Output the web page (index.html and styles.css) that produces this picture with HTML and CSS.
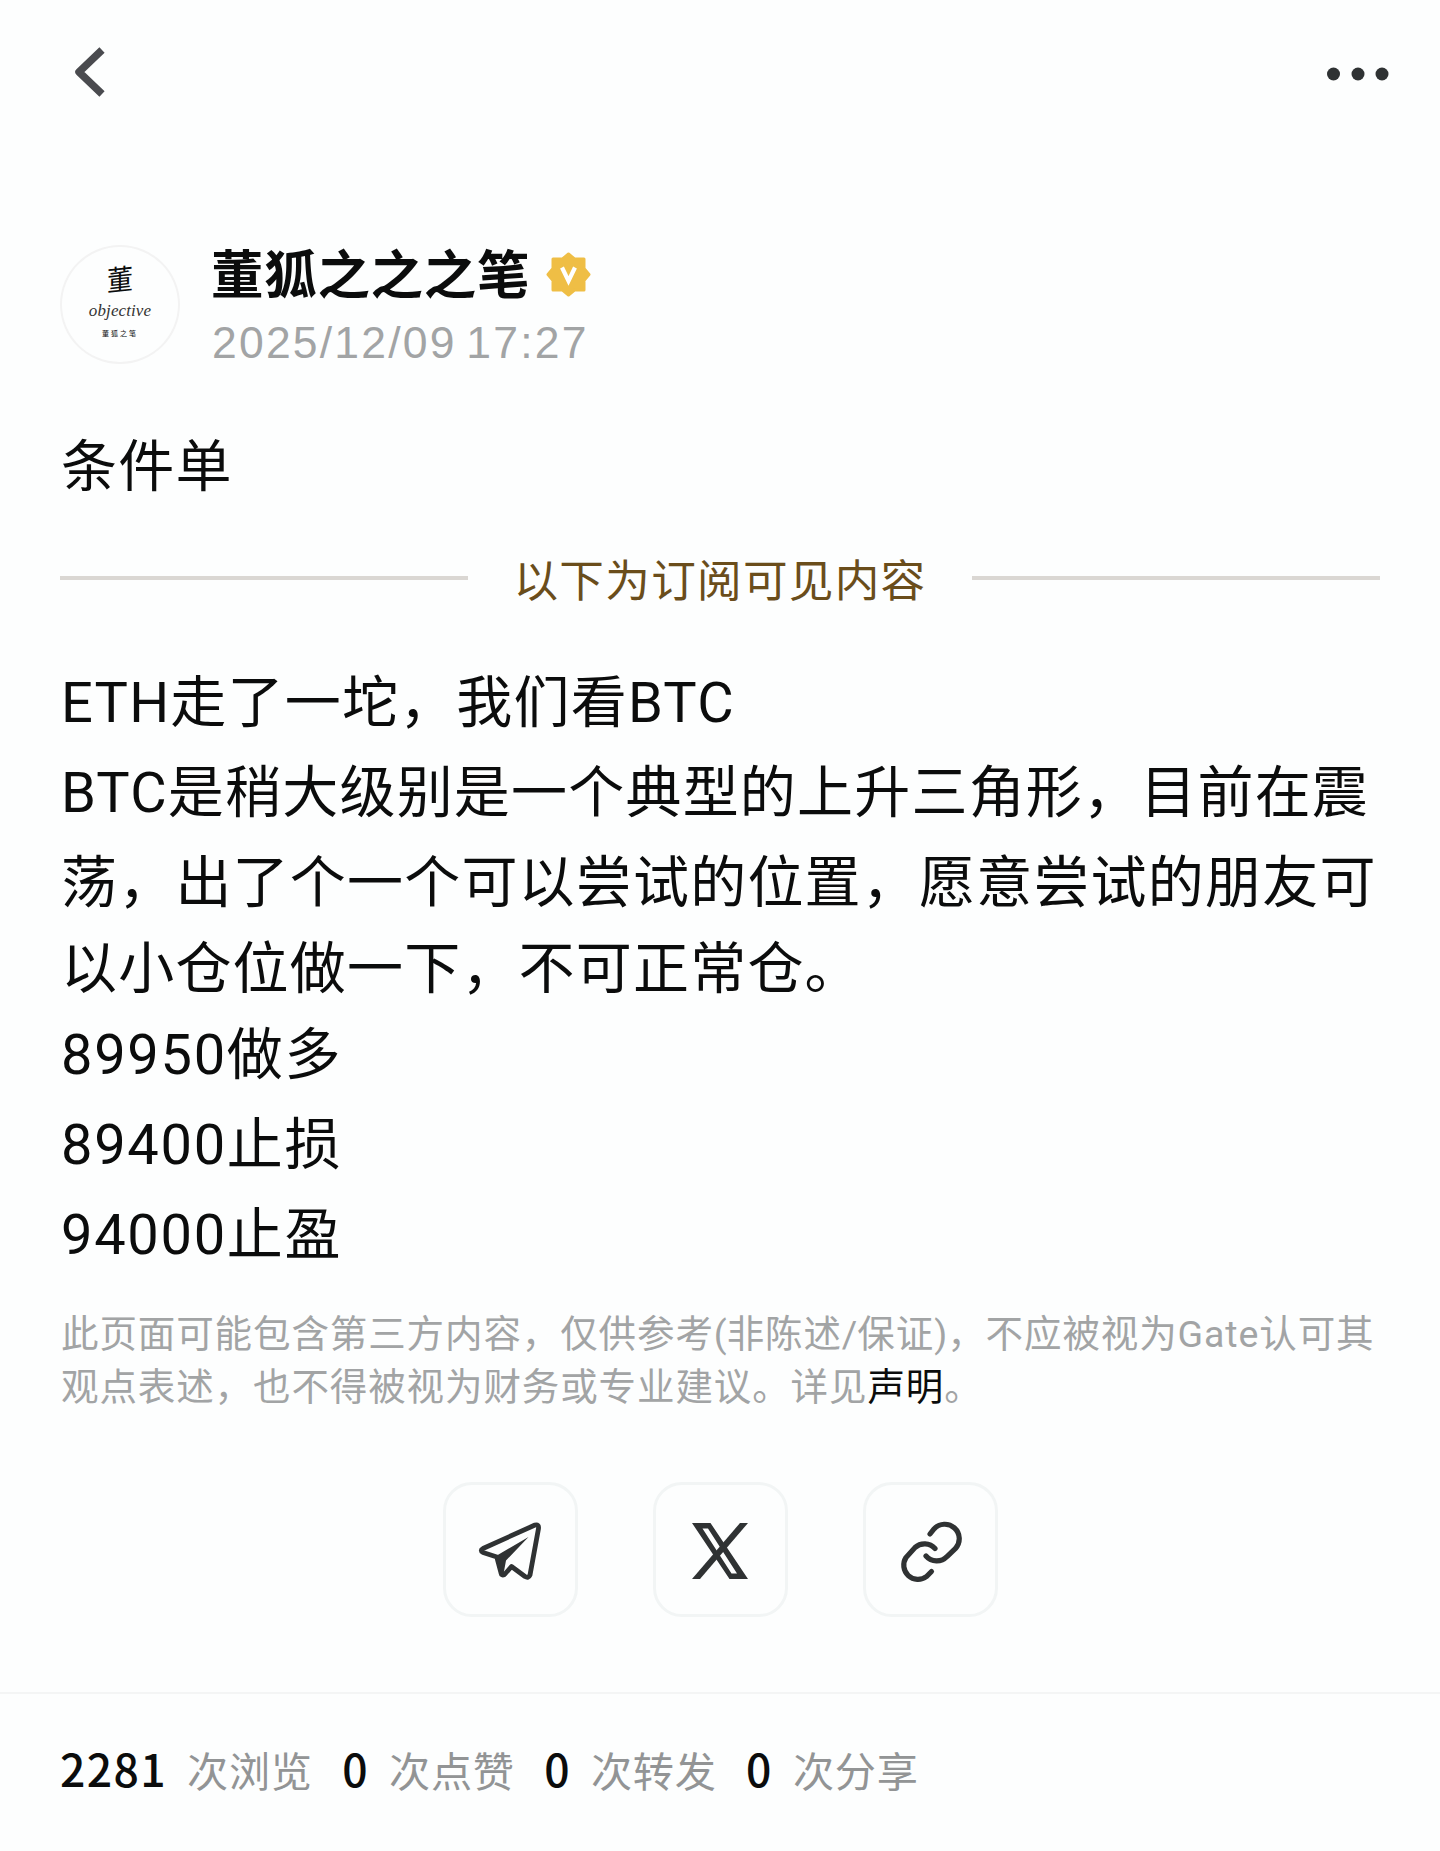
FILE: index.html
```
<!DOCTYPE html>
<html lang="zh-CN">
<head>
    <meta charset="UTF-8">
    <meta name="viewport" content="width=device-width, initial-scale=1.0">
    <title>条件单</title>
    <link rel="stylesheet" href="styles.css">
</head>
<body>
<div class="topbar">
    <svg class="back-icon" viewBox="0 0 32 52" fill="none" stroke="#4a4b4f" stroke-width="7.5" stroke-linejoin="round">
        <path d="M29 4 L6 26 L29 48"/>
    </svg>
    <svg class="more-icon" viewBox="0 0 62 14" fill="#2f3233">
        <circle cx="6.5" cy="7" r="6.5"/>
        <circle cx="31" cy="7" r="6.5"/>
        <circle cx="55" cy="7" r="6.5"/>
    </svg>
</div>
<div class="post">
    <div class="author">
        <div class="avatar">
            <span class="avatar-char">董</span>
            <span class="avatar-word">objective</span>
            <span class="avatar-small">董狐之笔</span>
        </div>
        <div class="author-info">
            <div class="name-row">
                <span class="name">董狐之之之笔</span>
                <svg class="badge" viewBox="0 0 45 45">
                    <path d="M22.5 2 L28.5 7 H38 V16.5 L43 22.5 L38 28.5 V38 H28.5 L22.5 43 L16.5 38 H7 V28.5 L2 22.5 L7 16.5 V7 H16.5 Z" fill="#efbe45" stroke="#efbe45" stroke-width="3" stroke-linejoin="round"/>
                    <path d="M16 15.5 L22.5 29 L29 15.5" fill="none" stroke="#fff" stroke-width="4.2"/>
                </svg>
            </div>
            <div class="date">2025/12/09 17:27</div>
        </div>
    </div>
    <div class="title">条件单</div>
    <div class="divider">
        <span class="line"></span>
        <span class="divider-text">以下为订阅可见内容</span>
        <span class="line"></span>
    </div>
    <div class="content">
        <p>ETH走了一坨，我们看BTC</p>
        <p>BTC是稍大级别是一个典型的上升三角形，目前在震</p>
        <p>荡，出了个一个可以尝试的位置，愿意尝试的朋友可</p>
        <p class="tight">以小仓位做一下，不可正常仓。</p>
        <p class="price">89950做多</p>
        <p class="price">89400止损</p>
        <p class="price">94000止盈</p>
    </div>
    <div class="notice">
        此页面可能包含第三方内容，仅供参考<span class="latin">(</span>非陈述<span class="latin">/</span>保证<span class="latin">)</span>，不应被视为Gate认可其<br>
        观点表述，也不得被视为财务或专业建议。详见<a href="#">声明</a>。
    </div>
    <div class="share">
        <button class="share-button">
            <svg viewBox="0 0 64 64" fill="none" stroke="#2f3233" stroke-width="4.8" stroke-linejoin="round" stroke-linecap="round">
                <path d="M22 39 L5 33.500 Q1.500 31.500 5 29.500 L57 6 Q61 5 60.500 9.500 L52 56 Q50.500 59.500 47 57.500 L33.500 47.500 L26.500 55.500 Q23.500 57 23 54 L19 39"/>
                <path d="M18 37 L50.500 18 L28 41.500 L25.500 55 H23 Z" fill="#2f3233" stroke="none"/>
            </svg>
        </button>
        <button class="share-button">
            <svg viewBox="0 0 64 64" fill="#2f3233" fill-rule="evenodd">
                <path d="M4 4 H22.500 L60 60 H41.500 Z M14.500 9.500 L43.500 54.500 H49 L20 9.500 Z"/>
                <path d="M52 4 H60 L12 60 H4 Z"/>
            </svg>
        </button>
        <button class="share-button">
            <svg viewBox="0 0 64 64" fill="none" stroke="#2f3233" stroke-width="5.2" stroke-linecap="round">
                <path d="M32 15 L36 10 A14.200 14.200 0 0 1 57.500 29.500 L49 37.500 A14.200 14.200 0 0 1 28 37"/>
                <path d="M37 29.500 A14.200 14.200 0 0 0 17 28.500 L8 38.500 A14.200 14.200 0 0 0 28.500 57.500 L33.500 52.500"/>
            </svg>
        </button>
    </div>
</div>
<div class="stats">
    <span class="stat"><b>2281</b>次浏览</span>
    <span class="stat"><b>0</b>次点赞</span>
    <span class="stat"><b>0</b>次转发</span>
    <span class="stat"><b>0</b>次分享</span>
</div>
</body>
</html>
```
FILE: styles.css
```
* {
    box-sizing: border-box;
}
body {
    font-family: Roboto, "Noto Sans CJK SC", sans-serif;
    background-color: #fdfefe;
    margin: 0;
    padding: 0;
    color: #0b0c0c;
}
.topbar {
    display: flex;
    justify-content: space-between;
    align-items: center;
    height: 144px;
    padding: 0 51px 0 73px;
}
.back-icon {
    width: 32px;
    height: 52px;
}
.more-icon {
    width: 62px;
    height: 14px;
    margin-top: 4px;
}
.post {
    padding: 101px 60px 0;
}
.author {
    display: flex;
    align-items: flex-start;
    height: 120px;
}
.avatar {
    display: flex;
    flex-direction: column;
    align-items: center;
    width: 120px;
    height: 119px;
    border: 2px solid #f3f3f3;
    border-radius: 50%;
    padding-top: 14px;
}
.avatar-char {
    font-family: "Noto Sans CJK SC", sans-serif;
    font-size: 26px;
    line-height: 34px;
    transform: skewY(-6deg) scaleY(1.1);
}
.avatar-word {
    font-family: "Liberation Serif", serif;
    font-style: italic;
    font-size: 17px;
    line-height: 31px;
    letter-spacing: 0.1px;
    color: #333;
}
.avatar-small {
    font-family: "Noto Sans CJK SC", sans-serif;
    font-size: 7px;
    line-height: 14px;
    letter-spacing: 2px;
}
.author-info {
    margin: -4px 0 0 31px;
}
.name-row {
    display: flex;
    align-items: center;
    height: 60px;
}
.name {
    font-family: "Noto Sans CJK SC", sans-serif;
    font-size: 52.5px;
    font-weight: 700;
    line-height: 60px;
    letter-spacing: 0.7px;
}
.badge {
    width: 45px;
    height: 45px;
    margin: 6px 0 0 16px;
}
.date {
    font-family: "Liberation Sans", sans-serif;
    font-size: 44.5px;
    line-height: 56px;
    letter-spacing: 2.2px;
    word-spacing: -5px;
    margin: 14px 0 0 1px;
    color: #a2a4a5;
}
.title {
    font-size: 56px;
    line-height: 90px;
    letter-spacing: 1.2px;
    margin-top: 57px;
    padding-left: 1px;
}
.divider {
    display: flex;
    justify-content: space-between;
    margin-top: 41px;
}
.line {
    width: 408px;
    height: 4px;
    margin-top: 23px;
    background-color: #dad7d3;
}
.divider-text {
    font-size: 44.6px;
    line-height: 58px;
    letter-spacing: 1.3px;
    color: #6a4d1b;
}
.content {
    margin-top: 47px;
    padding-left: 1px;
    font-size: 56px;
    letter-spacing: 1.2px;
    white-space: nowrap;
}
.content p {
    margin: 0;
    line-height: 90px;
}
.content .tight {
    line-height: 82px;
}
.content .price {
    letter-spacing: 1.7px;
}
.notice {
    margin-top: 28px;
    padding-left: 1px;
    font-size: 37.5px;
    line-height: 53px;
    letter-spacing: 0.9px;
    white-space: nowrap;
    color: #a2a4a5;
}
.notice .latin {
    letter-spacing: 0;
}
.notice a {
    color: #0b0c0c;
    text-decoration: none;
}
.share {
    display: flex;
    justify-content: center;
    gap: 75px;
    margin-top: 68px;
}
.share-button {
    display: flex;
    align-items: center;
    justify-content: center;
    width: 135px;
    height: 135px;
    padding: 3px 0 0;
    border: 3px solid #f2f5f5;
    border-radius: 29px;
    background-color: transparent;
    cursor: pointer;
}
.share-button svg {
    width: 64px;
    height: 64px;
}
.stats {
    display: flex;
    align-items: baseline;
    gap: 29.5px;
    height: 158px;
    margin-top: 75px;
    padding: 44px 60px 0;
    border-top: 2px solid #f4f5f5;
    font-size: 41.2px;
    line-height: 60px;
    letter-spacing: 0.7px;
    white-space: nowrap;
    color: #929495;
}
.stats b {
    font-family: "Noto Sans CJK SC", sans-serif;
    font-size: 44.5px;
    font-weight: 500;
    letter-spacing: 1.4px;
    margin-right: 20px;
    color: #0b0c0c;
}
```
